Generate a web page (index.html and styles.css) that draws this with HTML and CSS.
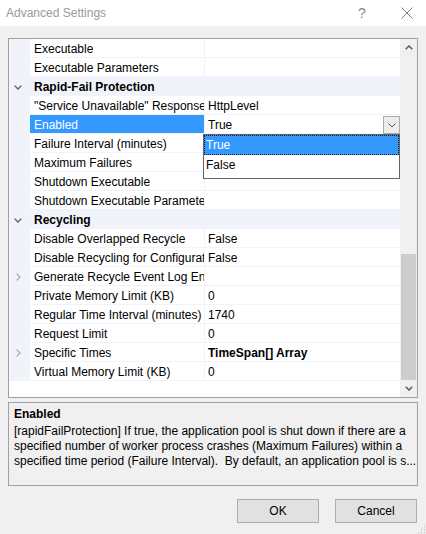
FILE: index.html
```html
<!DOCTYPE html>
<html>
<head>
<meta charset="utf-8">
<title>Advanced Settings</title>
<link rel="stylesheet" href="styles.css">
</head>
<body>
<div class="window">
  <div class="titlebar">
    <span class="title">Advanced Settings</span>
    <span class="help">?</span>
    <svg class="close" width="12" height="12" viewBox="0 0 12 12"><path d="M0.5 0.5 L11.5 11.5 M11.5 0.5 L0.5 11.5" stroke="#7a7a7a" stroke-width="1" fill="none"/></svg>
  </div>
  <div class="content">
    <div class="grid">
      <div class="rows">
        <div class="row"><div class="gutter"></div><div class="name">Executable</div><div class="value"></div></div>
        <div class="row"><div class="gutter"></div><div class="name">Executable Parameters</div><div class="value"></div></div>
        <div class="row cat"><div class="gutter"><svg class="chev-down" width="8" height="5" viewBox="0 0 8 5"><path d="M0.6 0.6 L4 4 L7.4 0.6" fill="none" stroke="#5a5a5a" stroke-width="1.3"/></svg></div><div class="catname">Rapid-Fail Protection</div></div>
        <div class="row"><div class="gutter"></div><div class="name">"Service Unavailable" Response Type</div><div class="value">HttpLevel</div></div>
        <div class="row"><div class="gutter"></div><div class="name selected">Enabled</div>
          <div class="value editing">
            <span>True</span>
            <div class="dropbtn"><svg width="8" height="5" viewBox="0 0 8 5"><path d="M0.5 0.5 L4 4 L7.5 0.5" fill="none" stroke="#555" stroke-width="1"/></svg></div>
            <div class="droplist">
              <div class="item active">True</div>
              <div class="item">False</div>
            </div>
          </div>
        </div>
        <div class="row"><div class="gutter"></div><div class="name">Failure Interval (minutes)</div><div class="value"></div></div>
        <div class="row"><div class="gutter"></div><div class="name">Maximum Failures</div><div class="value"></div></div>
        <div class="row"><div class="gutter"></div><div class="name">Shutdown Executable</div><div class="value"></div></div>
        <div class="row"><div class="gutter"></div><div class="name">Shutdown Executable Parameters</div><div class="value"></div></div>
        <div class="row cat"><div class="gutter"><svg class="chev-down" width="8" height="5" viewBox="0 0 8 5"><path d="M0.6 0.6 L4 4 L7.4 0.6" fill="none" stroke="#5a5a5a" stroke-width="1.3"/></svg></div><div class="catname">Recycling</div></div>
        <div class="row"><div class="gutter"></div><div class="name">Disable Overlapped Recycle</div><div class="value">False</div></div>
        <div class="row"><div class="gutter"></div><div class="name">Disable Recycling for Configuration Changes</div><div class="value">False</div></div>
        <div class="row"><div class="gutter"><svg class="chev-right" width="5" height="8" viewBox="0 0 5 8"><path d="M0.6 0.6 L4 4 L0.6 7.4" fill="none" stroke="#a6a6a6" stroke-width="1.2"/></svg></div><div class="name">Generate Recycle Event Log Entry</div><div class="value"></div></div>
        <div class="row"><div class="gutter"></div><div class="name">Private Memory Limit (KB)</div><div class="value">0</div></div>
        <div class="row"><div class="gutter"></div><div class="name">Regular Time Interval (minutes)</div><div class="value">1740</div></div>
        <div class="row"><div class="gutter"></div><div class="name">Request Limit</div><div class="value">0</div></div>
        <div class="row"><div class="gutter"><svg class="chev-right" width="5" height="8" viewBox="0 0 5 8"><path d="M0.6 0.6 L4 4 L0.6 7.4" fill="none" stroke="#a6a6a6" stroke-width="1.2"/></svg></div><div class="name">Specific Times</div><div class="value bold">TimeSpan[] Array</div></div>
        <div class="row"><div class="gutter"></div><div class="name">Virtual Memory Limit (KB)</div><div class="value">0</div></div>
      </div>
      <div class="scrollbar">
        <div class="sbtn"><svg width="8" height="5" viewBox="0 0 8 5"><path d="M0.7 4.3 L4 1 L7.3 4.3" fill="none" stroke="#606060" stroke-width="1.6"/></svg></div>
        <div class="track"><div class="thumb"></div></div>
        <div class="sbtn"><svg width="8" height="5" viewBox="0 0 8 5"><path d="M0.7 0.7 L4 4 L7.3 0.7" fill="none" stroke="#606060" stroke-width="1.6"/></svg></div>
      </div>
    </div>
    <div class="desc">
      <div class="desc-title">Enabled</div>
      <div class="desc-line">[rapidFailProtection] If true, the application pool is shut down if there are a</div>
      <div class="desc-line">specified number of worker process crashes (Maximum Failures) within a</div>
      <div class="desc-line">specified time period (Failure Interval).&nbsp; By default, an application pool is s...</div>
    </div>
    <div class="buttons">
      <div class="btn">OK</div>
      <div class="btn">Cancel</div>
    </div>
  </div>
  <svg class="grip" width="10" height="10" viewBox="0 0 10 10">
    <rect x="8" y="2" width="1" height="1" fill="#b4b4b4"/>
    <rect x="8" y="5" width="1" height="1" fill="#b4b4b4"/>
    <rect x="5" y="5" width="1" height="1" fill="#b4b4b4"/>
    <rect x="8" y="8" width="1" height="1" fill="#b4b4b4"/>
    <rect x="5" y="8" width="1" height="1" fill="#b4b4b4"/>
    <rect x="2" y="8" width="1" height="1" fill="#b4b4b4"/>
  </svg>
</div>
</body>
</html>
```

FILE: styles.css
```css
html, body {
  margin: 0;
  padding: 0;
  background: #f0f0f0;
}

body {
  font-family: "Liberation Sans", Arial, sans-serif;
  font-size: 12px;
  color: #000;
}

.window {
  position: relative;
  width: 426px;
  height: 534px;
  overflow: hidden;
}

.titlebar {
  height: 26px;
  background: #fff;
  display: flex;
  align-items: center;
  padding-left: 6px;
  box-sizing: border-box;
}

.title {
  flex: 1;
  color: #999;
  font-size: 12px;
}

.help {
  width: 8px;
  text-align: center;
  color: #8a8a8a;
  font-size: 14px;
  margin-right: 35px;
}

.close {
  display: block;
  margin-right: 13px;
}

.content {
  padding: 12px 8px 0 8px;
}

.grid {
  display: flex;
  height: 360px;
  border: 1px solid #a0a0a0;
  box-sizing: border-box;
  background: #fff;
}

.rows {
  flex: 1;
  overflow: hidden;
}

.row {
  display: flex;
  height: 19px;
}

.gutter {
  width: 21px;
  flex: none;
  height: 19px;
  background: #f0f3f9;
  display: flex;
  align-items: center;
  justify-content: center;
}

.chev-down {
  margin-left: -3px;
  margin-top: 1px;
  display: block;
}

.chev-right {
  margin-left: -2px;
  margin-top: 1px;
  display: block;
}

.name {
  width: 175px;
  flex: none;
  box-sizing: border-box;
  height: 19px;
  line-height: 20px;
  padding-left: 4px;
  border-bottom: 1px solid #f0f3f9;
  border-right: 1px solid #f0f3f9;
  white-space: nowrap;
  overflow: hidden;
}

.name.selected {
  background: #3399ff;
  color: #fff;
}

.value {
  flex: 1;
  box-sizing: border-box;
  height: 19px;
  line-height: 20px;
  padding-left: 3px;
  border-bottom: 1px solid #f0f3f9;
  white-space: nowrap;
  overflow: hidden;
}

.value.bold {
  font-weight: bold;
}

.value.editing {
  position: relative;
  overflow: visible;
  display: flex;
  z-index: 2;
}

.value.editing span {
  flex: 1;
}

.dropbtn {
  width: 17px;
  height: 18px;
  box-sizing: border-box;
  border: 1px solid #acacac;
  background: #ececec;
  display: flex;
  align-items: center;
  justify-content: center;
  margin-top: 1px;
}

.dropbtn svg {
  display: block;
}

.droplist {
  position: absolute;
  left: -2px;
  top: 19px;
  width: 197px;
  height: 45px;
  box-sizing: border-box;
  border: 1px solid #646464;
  background: #fff;
}

.item {
  height: 20px;
  line-height: 21px;
  padding-left: 2px;
}

.item.active {
  background: #3399ff;
  color: #fff;
  outline: 1px dotted #1a1a1a;
  outline-offset: -1px;
}

.cat .catname {
  flex: 1;
  height: 19px;
  line-height: 20px;
  padding-left: 4px;
  background: #f0f3f9;
  font-weight: bold;
}

.scrollbar {
  width: 17px;
  flex: none;
  background: #f0f0f0;
  display: flex;
  flex-direction: column;
}

.sbtn {
  height: 17px;
  flex: none;
  display: flex;
  align-items: center;
  justify-content: center;
}

.sbtn svg {
  display: block;
}

.track {
  flex: 1;
  display: flex;
  flex-direction: column;
  justify-content: flex-end;
}

.thumb {
  height: 126px;
  margin: 0 1px;
  background: #cdcdcd;
}

.desc {
  margin-top: 4px;
  height: 84px;
  box-sizing: border-box;
  border: 1px solid #a0a0a0;
  padding: 3px 5px 0 5px;
  overflow: hidden;
}

.desc-title {
  font-weight: bold;
  line-height: 16px;
  margin-bottom: 2px;
}

.desc-line {
  line-height: 15px;
  white-space: nowrap;
}

.buttons {
  display: flex;
  justify-content: flex-end;
  gap: 16px;
  margin-top: 13px;
  padding-right: 1px;
}

.btn {
  width: 82px;
  height: 24px;
  box-sizing: border-box;
  border: 1px solid #adadad;
  background: #e1e1e1;
  text-align: center;
  line-height: 23px;
}

.grip {
  position: absolute;
  right: 0;
  bottom: 0;
}
```
